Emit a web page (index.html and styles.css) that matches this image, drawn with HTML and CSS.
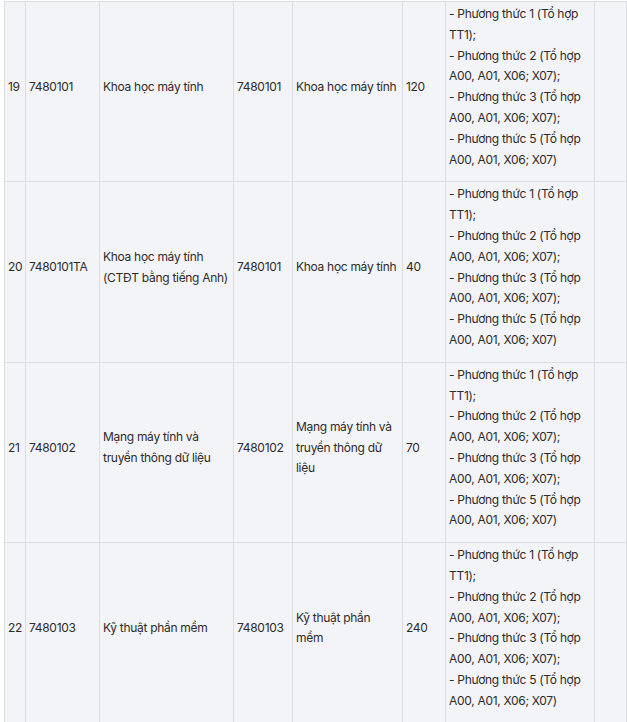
FILE: index.html
```html
<!DOCTYPE html>
<html lang="vi">
<head>
<meta charset="utf-8">
<link rel="stylesheet" href="styles.css">
</head>
<body>
<div class="wrap">
<table class="grid">
<colgroup>
<col class="c1"><col class="c2"><col class="c3"><col class="c4"><col class="c5"><col class="c6"><col class="c7"><col class="c8">
</colgroup>
<tbody>
<tr>
<td>19</td><td>7480101</td><td>Khoa học máy tính</td><td>7480101</td><td>Khoa học máy tính</td><td>120</td>
<td>- Phương thức 1 (Tổ hợp TT1);<br>- Phương thức 2 (Tổ hợp A00, A01, X06; X07);<br>- Phương thức 3 (Tổ hợp A00, A01, X06; X07);<br>- Phương thức 5 (Tổ hợp A00, A01, X06; X07)</td><td></td>
</tr>
<tr>
<td>20</td><td>7480101TA</td><td>Khoa học máy tính (CTĐT bằng tiếng Anh)</td><td>7480101</td><td>Khoa học máy tính</td><td>40</td>
<td>- Phương thức 1 (Tổ hợp TT1);<br>- Phương thức 2 (Tổ hợp A00, A01, X06; X07);<br>- Phương thức 3 (Tổ hợp A00, A01, X06; X07);<br>- Phương thức 5 (Tổ hợp A00, A01, X06; X07)</td><td></td>
</tr>
<tr>
<td>21</td><td>7480102</td><td>Mạng máy tính và truyền thông dữ liệu</td><td>7480102</td><td>Mạng máy tính và truyền thông dữ liệu</td><td>70</td>
<td>- Phương thức 1 (Tổ hợp TT1);<br>- Phương thức 2 (Tổ hợp A00, A01, X06; X07);<br>- Phương thức 3 (Tổ hợp A00, A01, X06; X07);<br>- Phương thức 5 (Tổ hợp A00, A01, X06; X07)</td><td></td>
</tr>
<tr>
<td>22</td><td>7480103</td><td>Kỹ thuật phần mềm</td><td>7480103</td><td>Kỹ thuật phần mềm</td><td>240</td>
<td>- Phương thức 1 (Tổ hợp TT1);<br>- Phương thức 2 (Tổ hợp A00, A01, X06; X07);<br>- Phương thức 3 (Tổ hợp A00, A01, X06; X07);<br>- Phương thức 5 (Tổ hợp A00, A01, X06; X07)</td><td></td>
</tr>
</tbody>
</table>
</div>
</body>
</html>
```
FILE: styles.css
```css
html, body {
  margin: 0;
  padding: 0;
  background: #ffffff;
}
.wrap {
  padding: 1px 0 0 4px;
  overflow: hidden;
  width: 623px;
}
.grid {
  border-collapse: collapse;
  table-layout: fixed;
  width: 622px;
  background: #f3f4f8;
  font-family: Inter, "Noto Sans", sans-serif;
  font-size: 12px;
  line-height: 20.8px;
  letter-spacing: -0.3px;
  color: #2e2b29;
}
.grid td {
  border: 1px solid #dcdde1;
  padding: 2px 3px 11px 3px;
  vertical-align: middle;
  height: 166px;
}
.c1 { width: 21px; }
.c2 { width: 74px; }
.c3 { width: 134px; }
.c4 { width: 59px; }
.c5 { width: 110px; }
.c6 { width: 43px; }
.c7 { width: 149px; }
.c8 { width: 32px; }
```
